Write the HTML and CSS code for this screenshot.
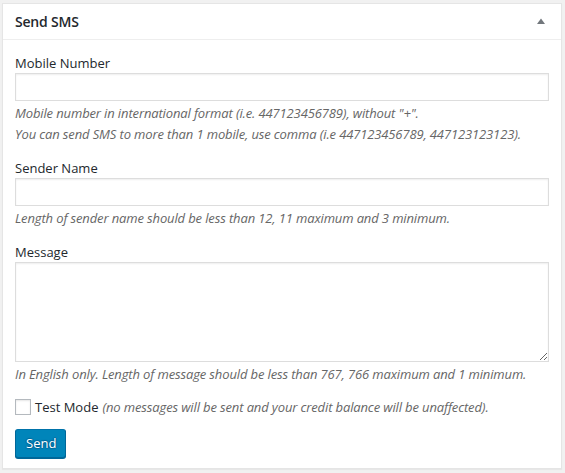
FILE: index.html
```html
<!DOCTYPE html>
<html>
<head>
<meta charset="utf-8">
<link rel="stylesheet" href="styles.css">
</head>
<body>
<div class="postbox">
  <div class="hndle">
    <h2 class="title">Send SMS</h2>
    <svg class="toggle" width="10" height="8" viewBox="0 0 10 8"><path d="M1 7 L5 1.5 L9 7 Z" fill="#72777c"/></svg>
  </div>
  <div class="inside">
    <div class="field">
      <label class="label">Mobile Number</label>
      <input class="text" type="text">
      <p class="description">Mobile number in international format (i.e. 447123456789), without "+".<br>You can send SMS to more than 1 mobile, use comma (i.e 447123456789, 447123123123).</p>
    </div>
    <div class="field">
      <label class="label">Sender Name</label>
      <input class="text" type="text">
      <p class="description">Length of sender name should be less than 12, 11 maximum and 3 minimum.</p>
    </div>
    <div class="field">
      <label class="label">Message</label>
      <textarea class="area"></textarea>
      <p class="description">In English only. Length of message should be less than 767, 766 maximum and 1 minimum.</p>
    </div>
    <div class="check-row">
      <span class="checkbox"></span>
      <span class="check-label">Test Mode</span>
      <em class="note">(no messages will be sent and your credit balance will be unaffected).</em>
    </div>
    <button class="button" type="button">Send</button>
  </div>
</div>
</body>
</html>
```
FILE: styles.css
```css
html, body {
  margin: 0;
  padding: 0;
  background: #f1f1f1;
}
body {
  padding: 3px 3px 4px 2px;
  font-family: "Open Sans", "Noto Sans", sans-serif;
  color: #23282d;
  font-size: 13px;
}
.postbox {
  background: #fff;
  border: 1px solid #e5e5e5;
  box-shadow: 0 1px 1px rgba(0,0,0,0.04);
}
.hndle {
  height: 35px;
  border-bottom: 1px solid #eee;
  display: flex;
  align-items: center;
  justify-content: space-between;
  padding: 0 12px;
}
.title {
  margin: 0;
  font-size: 14px;
  font-weight: 600;
  color: #23282d;
  letter-spacing: -0.2px;
}
.toggle {
  margin-right: 3px;
  margin-top: -2px;
}
.inside {
  padding: 13px 12px 10px 12px;
  display: flex;
  flex-direction: column;
  align-items: flex-start;
}
.field {
  display: flex;
  flex-direction: column;
  align-self: stretch;
  margin-bottom: 13px;
}
.label {
  font-size: 13px;
  line-height: 20px;
  color: #23282d;
}
.text {
  box-sizing: border-box;
  height: 28px;
  margin: 0;
  border: 1px solid #ddd;
  box-shadow: inset 0 1px 2px rgba(0,0,0,0.07);
  background: #fff;
  font: inherit;
}
.area {
  box-sizing: border-box;
  height: 100px;
  border: 1px solid #ddd;
  box-shadow: inset 0 1px 2px rgba(0,0,0,0.07);
  background: #fff;
  font: inherit;
  resize: vertical;
  margin: 0;
}
.description {
  margin: 2px 0 0 0;
  font-style: italic;
  color: #666;
  font-size: 13px;
  line-height: 21px;
  letter-spacing: -0.13px;
}
.check-row {
  display: flex;
  align-items: center;
  margin-top: 0;
  font-size: 13px;
  line-height: 18px;
}
.checkbox {
  box-sizing: border-box;
  width: 16px;
  height: 16px;
  border: 1px solid #b4b9be;
  background: #fff;
  box-shadow: inset 0 1px 2px rgba(0,0,0,0.1);
  margin-right: 4px;
}
.check-label {
  color: #23282d;
  margin-right: 4px;
}
.note {
  color: #666;
  font-size: 13px;
  letter-spacing: -0.13px;
}
.button {
  margin-top: 13px;
  height: 29px;
  padding: 0 10px 2px;
  background: #0085ba;
  border: 1px solid #0073aa;
  border-color: #0073aa #006799 #006799;
  border-radius: 3px;
  box-shadow: 0 1px 0 #006799;
  color: #fff;
  font-family: inherit;
  font-size: 13px;
  text-shadow: 0 -1px 1px #006799, 1px 0 1px #006799, 0 1px 1px #006799, -1px 0 1px #006799;
  width: 51px;
}
```
